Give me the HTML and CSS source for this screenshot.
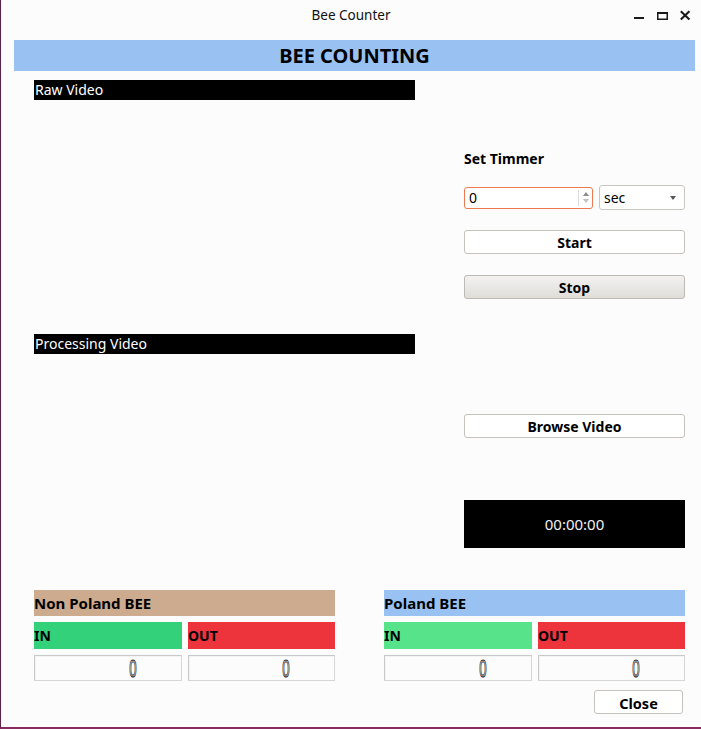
FILE: index.html
```html
<!DOCTYPE html>
<html>
<head>
<meta charset="utf-8">
<title>Bee Counter</title>
<link rel="stylesheet" href="styles.css">
</head>
<body>
<div class="window">
  <div class="titlebar">
    <div></div>
    <div class="title">Bee Counter</div>
    <div class="controls">
      <svg class="ctl" width="12" height="12" viewBox="0 0 12 12"><rect x="1" y="8" width="10" height="2" fill="#1a1a1a"/></svg>
      <svg class="ctl" width="12" height="12" viewBox="0 0 12 12"><rect x="1.75" y="3.75" width="9.5" height="6.5" fill="none" stroke="#1a1a1a" stroke-width="1.5"/><rect x="1" y="3" width="11" height="2" fill="#1a1a1a"/></svg>
      <svg class="ctl" width="12" height="12" viewBox="0 0 12 12"><path d="M1.8 2.2 L10.4 10.4 M10.4 2.2 L1.8 10.4" stroke="#1a1a1a" stroke-width="2.1" fill="none"/></svg>
    </div>
  </div>

  <div class="banner">BEE COUNTING</div>

  <div class="main">
    <div class="videos">
      <div class="vlabel">Raw Video</div>
      <div class="vframe raw"></div>
      <div class="vlabel">Processing Video</div>
      <div class="vframe proc"></div>
    </div>
    <div class="side">
      <div class="set-label">Set Timmer</div>
      <div class="timer-row">
        <div class="spin">
          <span class="spin-val">0</span>
          <span class="spin-btns"><span class="up"></span><span class="down"></span></span>
        </div>
        <div class="combo"><span>sec</span><span class="caret"></span></div>
      </div>
      <button class="btn start">Start</button>
      <button class="btn stop">Stop</button>
      <button class="btn browse">Browse Video</button>
      <div class="clock">00:00:00</div>
    </div>
  </div>

  <div class="counters">
    <div class="panel">
      <div class="ptitle tan">Non Poland BEE</div>
      <div class="pair">
        <div class="tag in">IN</div>
        <div class="tag out">OUT</div>
      </div>
      <div class="pair">
        <div class="lcd"><span class="digit">0</span></div>
        <div class="lcd"><span class="digit">0</span></div>
      </div>
    </div>
    <div class="panel">
      <div class="ptitle blue">Poland BEE</div>
      <div class="pair">
        <div class="tag in light">IN</div>
        <div class="tag out">OUT</div>
      </div>
      <div class="pair">
        <div class="lcd"><span class="digit">0</span></div>
        <div class="lcd"><span class="digit">0</span></div>
      </div>
    </div>
  </div>

  <div class="footer">
    <button class="btn close">Close</button>
  </div>
</div>
</body>
</html>
```

FILE: styles.css
```css
* { box-sizing: border-box; }

html, body {
  margin: 0;
  padding: 0;
  background: #fcfcfc;
}

body {
  font-family: "Noto Sans", "Open Sans", sans-serif;
  color: #000;
}

.window {
  width: 701px;
  height: 729px;
  background: #fcfcfc;
  border-left: 1px solid #5e2349;
  border-bottom: 2px solid #8a2b60;
  overflow: hidden;
}

.titlebar {
  height: 40px;
  display: grid;
  grid-template-columns: 1fr auto 1fr;
  align-items: start;
}

.title {
  padding-top: 6px;
  font-size: 13.5px;
  line-height: 18px;
  color: #111;
}

.controls {
  display: flex;
  justify-content: flex-end;
  gap: 11px;
  padding-top: 9px;
  padding-right: 10px;
}

.ctl { display: block; }

.banner {
  margin: 0 6px 0 13px;
  height: 31px;
  line-height: 31px;
  background: #99c1f1;
  text-align: center;
  font-weight: 700;
  font-size: 20px;
}

.main {
  display: flex;
  gap: 49px;
  padding-left: 33px;
  margin-top: 9px;
}

.videos {
  width: 381px;
  display: flex;
  flex-direction: column;
}

.vlabel {
  height: 20px;
  line-height: 20px;
  background: #000;
  color: #fff;
  font-size: 14px;
  padding-left: 1px;
}

.vframe.raw { height: 234px; }
.vframe.proc { height: 236px; }

.side {
  width: 221px;
  display: flex;
  flex-direction: column;
}

.set-label {
  margin-top: 70px;
  font-weight: 700;
  font-size: 14px;
  line-height: 17px;
}

.timer-row {
  margin-top: 18px;
  height: 25px;
  display: flex;
  align-items: center;
  gap: 6px;
}

.spin {
  width: 129px;
  height: 22px;
  border: 1px solid #ef7a50;
  border-radius: 3px;
  background: #fff;
  display: flex;
  align-items: stretch;
}

.spin-val {
  flex: 1;
  font-size: 14px;
  line-height: 20px;
  padding-left: 4px;
}

.spin-btns {
  width: 14px;
  margin: 2px 0;
  border-left: 1px solid #dcdcdc;
  display: flex;
  flex-direction: column;
  align-items: center;
  justify-content: center;
  gap: 3px;
}

.spin-btns .up {
  width: 0;
  height: 0;
  border-left: 3.5px solid transparent;
  border-right: 3.5px solid transparent;
  border-bottom: 4px solid #8a8a8a;
}

.spin-btns .down {
  width: 0;
  height: 0;
  border-left: 3.5px solid transparent;
  border-right: 3.5px solid transparent;
  border-top: 4px solid #c0c0c0;
}

.combo {
  flex: 1;
  height: 25px;
  border: 1px solid #cac7c3;
  border-radius: 3px;
  background: #fff;
  display: flex;
  align-items: center;
  justify-content: space-between;
  padding: 0 8px 0 4px;
  font-size: 14px;
}

.caret {
  width: 0;
  height: 0;
  border-left: 3.5px solid transparent;
  border-right: 3.5px solid transparent;
  border-top: 4px solid #555;
}

.btn {
  display: block;
  height: 24px;
  padding: 1px 0 0;
  border: 1px solid #c5c2be;
  border-radius: 3px;
  background: #fff;
  font-family: "Noto Sans", "Open Sans", sans-serif;
  font-weight: 700;
  font-size: 14px;
  line-height: 20px;
  color: #000;
  text-align: center;
}

.side .btn { width: 221px; }

.btn.start { margin-top: 20px; }

.btn.stop {
  margin-top: 21px;
  background: linear-gradient(#f3f2f1, #e0ddd9);
  border-color: #bdb9b4;
}

.btn.browse { margin-top: 115px; }

.clock {
  margin-top: 62px;
  height: 48px;
  background: #000;
  color: #f2f2f2;
  font-size: 15px;
  line-height: 48px;
  text-align: center;
}

.counters {
  display: flex;
  gap: 49px;
  padding-left: 33px;
}

.panel {
  width: 301px;
  display: flex;
  flex-direction: column;
  gap: 6px;
}

.ptitle {
  height: 26px;
  line-height: 26px;
  font-weight: 700;
  font-size: 15px;
}

.ptitle.tan { background: #cdab8f; }
.ptitle.blue { background: #99c1f1; }

.pair {
  display: grid;
  grid-template-columns: 148px 147px;
  gap: 6px;
}

.tag {
  height: 27px;
  line-height: 27px;
  font-weight: 700;
  font-size: 14px;
}

.tag.in { background: #33d17a; }
.tag.in.light { background: #57e389; }
.tag.out { background: #ed333b; }

.lcd {
  height: 26px;
  border: 1px solid #c8c8c8;
  border-right-color: #d6d6d6;
  border-bottom-color: #d6d6d6;
  box-shadow: inset 1px 1px 0 #f4f4f4;
  background: #fcfcfc;
  display: flex;
  align-items: center;
  justify-content: flex-end;
  padding-right: 44px;
}

.digit {
  display: inline-block;
  font-family: "Liberation Sans", sans-serif;
  font-size: 14px;
  line-height: 14px;
  color: #fcfcfc;
  -webkit-text-stroke: 0.6px #222;
  transform: scale(0.95, 1.75);
}

.footer {
  display: flex;
  justify-content: flex-end;
  padding-right: 18px;
  margin-top: 9px;
}

.btn.close {
  width: 89px;
  font-size: 14.5px;
}
```
